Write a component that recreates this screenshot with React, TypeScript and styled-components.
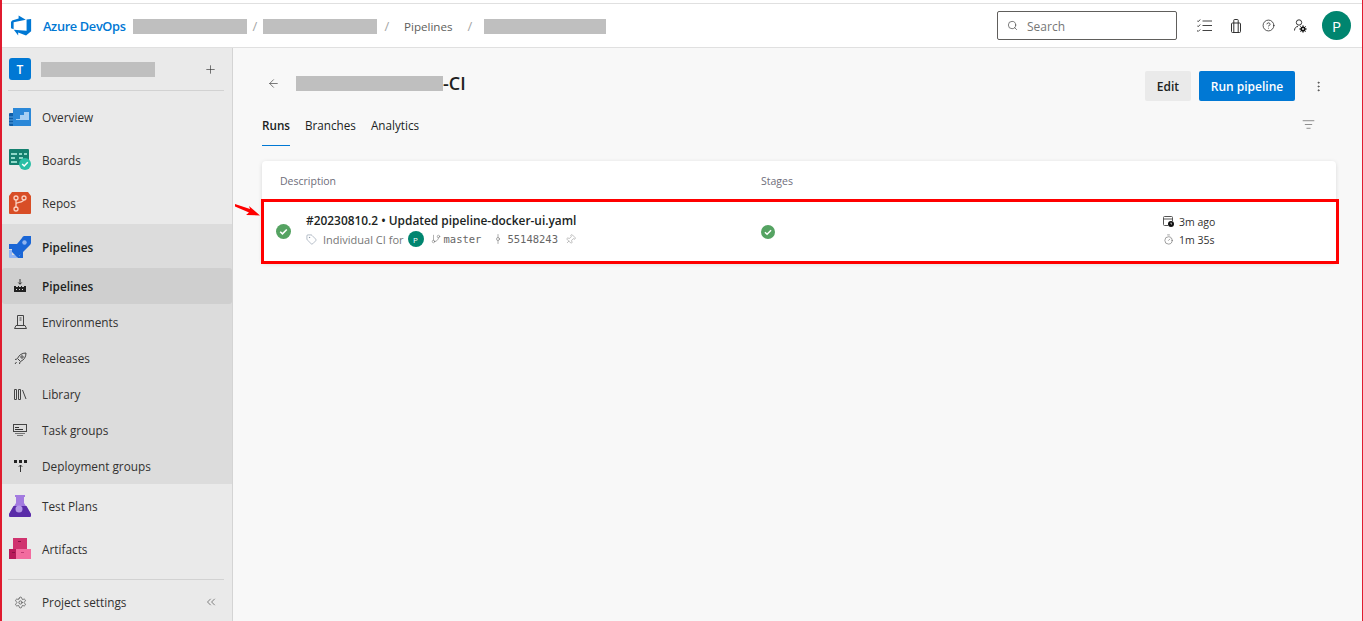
import styled, { createGlobalStyle } from 'styled-components';
import {
	ArrowLeft,
	ChevronsLeft,
	CircleHelp,
	EllipsisVertical,
	GitBranch,
	GitCommitVertical,
	ListFilter,
	Pin,
	Plus,
	Search,
	Settings,
	Tag,
	Timer,
} from 'lucide-react';

const GlobalStyle = createGlobalStyle`
	html, body {
		margin: 0;
		height: 100%;
		overflow: hidden;
	}
	body {
		background: #fff;
		font-family: "Open Sans", "Noto Sans", sans-serif;
		color: #201f1e;
	}
`;

// Icons
const LogoIcon = () => (
	<svg width="21" height="21" viewBox="0 0 24 24">
		<path fill="#0078d4" d="M23 4.6v14l-5.8 4.8-9-3.3v3.3l-5-6.6 14.6 1.200V5.200L23 4.600zm-6.100.8L8.700.7V4L1.300 6.200 0 8v7l3 1.300V8.300l14-2.900z" />
	</svg>
);

const ChecklistIcon = () => (
	<svg width="15" height="13" viewBox="0 0 15 13" fill="none" stroke="#444" strokeWidth="1">
		<path d="M0 1.500l1.200 1.200L3.200.5M0 6.500l1.200 1.200 2-2.200M0 11.500l1.200 1 2-2M5.500 2h9.500M5.500 6.500h9.500M5.500 11.500h9.500" />
	</svg>
);

const BagIcon = () => (
	<svg width="10" height="14" viewBox="0 0 10 14" fill="none" stroke="#333" strokeWidth="1">
		<rect x=".5" y="4" width="9" height="9.500" rx="1" />
		<path d="M2.800 4V1.200a.7.7 0 0 1 .7-.7h3a.7.7 0 0 1 .7.7V4M2.800 4v9.500M7.200 4v9.500" />
	</svg>
);

const UserGearIcon = () => (
	<svg width="13" height="14" viewBox="0 0 13 14">
		<circle cx="5" cy="3.500" r="2.700" fill="none" stroke="#333" />
		<path d="M.5 11.500c0-2.500 1.500-4 3.500-4" fill="none" stroke="#333" />
		<circle cx="9" cy="10" r="2.600" fill="#111" />
		<path d="M9 6.300v7.400M5.300 10h7.400M6.400 7.400l5.200 5.200M11.600 7.400l-5.200 5.200" stroke="#111" strokeWidth="1" />
		<circle cx="9" cy="10" r=".9" fill="#fff" />
	</svg>
);

const OverviewIcon = () => (
	<svg width="22" height="20" viewBox="0 0 22 20">
		<rect x="0" y="6" width="22" height="13" rx="1" fill="#0f5ea8" />
		<path d="M4 1h17a1 1 0 0 1 1 1v17H4z" fill="#2b88d8" />
		<path d="M7 12h4V8h4V5h5v8H7z" fill="#a8d0f3" />
		<path d="M0 10h4M0 13h4M0 16h4" stroke="#5ea6e2" strokeWidth="1" />
	</svg>
);

const BoardsIcon = () => (
	<svg width="22" height="21" viewBox="0 0 22 21">
		<rect x="0" y="0" width="20" height="16" rx="1" fill="#14806f" />
		<path d="M2 4h6v2H2zM10 4h3v2h-3zM15 4h3v2h-3zM2 8h4v2H2zM10 8h4v2h-4zM2 12h6v2H2z" fill="#8fd8c8" />
		<circle cx="16" cy="15" r="6" fill="#2bbfa6" />
		<path d="M13.200 15l2 2 3.600-3.800" fill="none" stroke="#fff" strokeWidth="1.500" />
	</svg>
);

const ReposIcon = () => (
	<svg width="22" height="22" viewBox="0 0 22 22">
		<path d="M3 0h16l3 4v17a1 1 0 0 1-1 1H1a1 1 0 0 1-1-1V4z" fill="#d84e26" />
		<path d="M7 7v9M7 12c0-2 8-1 8-5" fill="none" stroke="#fbd0c0" strokeWidth="1.300" />
		<circle cx="7" cy="6" r="2" fill="none" stroke="#fbd0c0" strokeWidth="1.300" />
		<circle cx="15" cy="6" r="2" fill="none" stroke="#fbd0c0" strokeWidth="1.300" />
		<circle cx="7" cy="17" r="2" fill="none" stroke="#fbd0c0" strokeWidth="1.300" />
	</svg>
);

const PipelinesIcon = () => (
	<svg width="22" height="22" viewBox="0 0 22 22">
		<path d="M0 14h3v5h5v3H1a1 1 0 0 1-1-1z" fill="#91b4f2" />
		<path d="M22 0v7a3 3 0 0 1-1 2L10 20v2H9l-3-3-3-3V8h5l5-6a3 3 0 0 1 2-2z" fill="#1a66d6" />
		<path d="M0 8h8l-5 5H0zM14 14v8H9l5-8z" fill="#1a66d6" />
		<circle cx="15.500" cy="6.500" r="2.200" fill="#8fb4f0" />
	</svg>
);

const TestPlansIcon = () => (
	<svg width="22" height="22" viewBox="0 0 22 22">
		<path d="M6 0h10v2h-1v6l7 11a2 2 0 0 1-2 3H2a2 2 0 0 1-2-3l7-11V2H6z" fill="#a37be0" />
		<path d="M4.500 11h13L22 19a2 2 0 0 1-2 3H2a2 2 0 0 1-2-3z" fill="#5a2ca8" />
		<circle cx="10" cy="14" r="3.500" fill="#b497e6" />
	</svg>
);

const ArtifactsIcon = () => (
	<svg width="22" height="21" viewBox="0 0 22 21">
		<rect x="4" y="0" width="14" height="11" fill="#d0336f" />
		<rect x="0" y="11" width="8" height="10" fill="#b81a5a" />
		<rect x="7" y="11" width="15" height="10" fill="#f26c9f" />
		<rect x="9" y="3" width="3" height="1" fill="#8c1145" />
		<rect x="12" y="14" width="3" height="1" fill="#c23b75" />
		<rect x="3" y="14" width="3" height="1" fill="#8c1145" />
	</svg>
);

const SubPipelinesIcon = () => (
	<svg width="14" height="14" viewBox="0 0 14 14">
		<path d="M7 0v5M5.300 3.500 7 5.300l1.700-1.800" fill="none" stroke="#333" strokeWidth="1" />
		<path d="M1 7h2v1h2V7h1v1h2V7h1v1h2V7h2v6H1z" fill="#222" />
		<path d="M3 10h1v1H3zM6 10h1v1H6zM9 10h1v1H9z" fill="#ddd" />
	</svg>
);

const EnvironmentsIcon = () => (
	<svg width="13" height="14" viewBox="0 0 13 14" fill="none" stroke="#444" strokeWidth="1">
		<path d="M3.500.5h6v10h-6zM.5 13.500l1.500-3h9l1.500 3z" />
		<path d="M5.500 3h2M5.500 5h2" />
	</svg>
);

const ReleasesIcon = () => (
	<svg width="13" height="13" viewBox="0 0 13 13" fill="none" stroke="#444" strokeWidth="1">
		<path d="M12 1c0 4-2 7-5.500 8.500l-3-3C5 3 8 1 12 1z" />
		<circle cx="8" cy="5" r="1.200" />
		<path d="M3 7 1 7.500M6 10l-.5 2M2.500 10 1 12" />
	</svg>
);

const LibraryIcon = () => (
	<svg width="13" height="11" viewBox="0 0 13 11" fill="none" stroke="#444" strokeWidth="1">
		<path d="M.5.500h2v10h-2zM4.500.500h2v10h-2zM8.500 1l3.500 9" />
	</svg>
);

const TaskGroupsIcon = () => (
	<svg width="14" height="12" viewBox="0 0 14 12">
		<rect x=".5" y=".5" width="13" height="7" fill="none" stroke="#444" />
		<path d="M2 3h4v1H2zM2 5h8v1H2z" fill="#333" />
		<path d="M2 9h10v1H2zM4 11h6v1H4z" fill="#777" />
	</svg>
);

const DeploymentGroupsIcon = () => (
	<svg width="13" height="12" viewBox="0 0 13 12">
		<path d="M0 0h3v3H0zM5 0h3v3H5zM10 0h3v3h-3z" fill="#222" />
		<path d="M6.500 12V5M4.800 6.800 6.500 5l1.700 1.800" fill="none" stroke="#333" />
	</svg>
);

const CheckBadge = ({ size }: { size: number }) => (
	<svg width={size} height={size} viewBox="0 0 16 16">
		<circle cx="8" cy="8" r="8" fill="#55a362" />
		<path d="M4.500 8.300l2.400 2.200 4.600-4.600" fill="none" stroke="#fff" strokeWidth="1.700" />
	</svg>
);

const CalendarClockIcon = () => (
	<svg width="11" height="11" viewBox="0 0 11 11">
		<path d="M5 9.500H1.500a1 1 0 0 1-1-1v-7a1 1 0 0 1 1-1h7a1 1 0 0 1 1 1V5M.5 3h9" fill="none" stroke="#555" />
		<circle cx="8" cy="8" r="3" fill="#111" />
		<path d="M8 6.500V8h1" fill="none" stroke="#fff" strokeWidth=".7" />
	</svg>
);

const RedArrow = () => (
	<svg width="26" height="14" viewBox="0 0 26 14">
		<path d="M0 1 15 6l-1-3 11 9.500L11 12l3-2.500L0 3.500z" fill="#f00" />
	</svg>
);

// Data
const topNav = [
	{ label: 'Overview', icon: <OverviewIcon /> },
	{ label: 'Boards', icon: <BoardsIcon /> },
	{ label: 'Repos', icon: <ReposIcon /> },
];

const subNav = [
	{ label: 'Pipelines', icon: <SubPipelinesIcon />, active: true },
	{ label: 'Environments', icon: <EnvironmentsIcon /> },
	{ label: 'Releases', icon: <ReleasesIcon /> },
	{ label: 'Library', icon: <LibraryIcon /> },
	{ label: 'Task groups', icon: <TaskGroupsIcon /> },
	{ label: 'Deployment groups', icon: <DeploymentGroupsIcon /> },
];

export default function App() {
	return (
		<>
			<GlobalStyle />
			<Frame>
				<Header>
					<Logo>
						<LogoIcon />
						<Brand>Azure DevOps</Brand>
					</Logo>
					<Crumbs>
						<Redacted $w={114} $h={15} />
						<Slash $w={16}>/</Slash>
						<Redacted $w={114} $h={15} />
						<Slash $w={20}>/</Slash>
						<Crumb>Pipelines</Crumb>
						<Slash $w={20} $after={4}>
							/
						</Slash>
						<Redacted $w={122} $h={15} />
					</Crumbs>
					<SearchBox>
						<Search size={11} strokeWidth={1.5} color="#444" />
						<SearchLabel>Search</SearchLabel>
					</SearchBox>
					<HeaderIcons>
						<HeaderIcon>
							<ChecklistIcon />
						</HeaderIcon>
						<HeaderIcon>
							<BagIcon />
						</HeaderIcon>
						<HeaderIcon>
							<CircleHelp size={13} strokeWidth={1.4} color="#222" />
						</HeaderIcon>
						<HeaderIcon>
							<UserGearIcon />
						</HeaderIcon>
					</HeaderIcons>
					<Avatar>P</Avatar>
				</Header>
				<Body>
					<Sidebar>
						<ProjectRow>
							<ProjectBadge>T</ProjectBadge>
							<Redacted $w={114} $h={15} />
							<PlusButton>
								<Plus size={13} strokeWidth={1.2} color="#333" />
							</PlusButton>
						</ProjectRow>
						<Divider />
						<Nav>
							{topNav.map((item) => (
								<NavRow key={item.label}>
									<IconSlot>{item.icon}</IconSlot>
									{item.label}
								</NavRow>
							))}
							<Group>
								<GroupTitle>
									<IconSlot>
										<PipelinesIcon />
									</IconSlot>
									<strong>Pipelines</strong>
								</GroupTitle>
								{subNav.map((item) => (
									<SubRow key={item.label} $active={item.active}>
										<IconSlot>{item.icon}</IconSlot>
										{item.active ? <strong>{item.label}</strong> : item.label}
									</SubRow>
								))}
							</Group>
							<NavRow>
								<IconSlot>
									<TestPlansIcon />
								</IconSlot>
								Test Plans
							</NavRow>
							<NavRow>
								<IconSlot>
									<ArtifactsIcon />
								</IconSlot>
								Artifacts
							</NavRow>
						</Nav>
						<FooterDivider />
						<SettingsRow>
							<IconSlot>
								<Settings size={13} strokeWidth={1.3} color="#444" />
							</IconSlot>
							Project settings
							<Collapse>
								<ChevronsLeft size={14} strokeWidth={1.1} color="#444" />
							</Collapse>
						</SettingsRow>
					</Sidebar>
					<Main>
						<TitleBar>
							<ArrowLeft size={13} strokeWidth={1.3} color="#444" />
							<TitleText>
								<Redacted $w={147} $h={15} />
								<Title>-CI</Title>
							</TitleText>
							<Actions>
								<EditButton>Edit</EditButton>
								<RunButton>Run pipeline</RunButton>
								<MoreButton>
									<EllipsisVertical size={13} strokeWidth={1.5} color="#444" />
								</MoreButton>
							</Actions>
						</TitleBar>
						<TabBar>
							<Tab $active>Runs</Tab>
							<Tab>Branches</Tab>
							<Tab>Analytics</Tab>
							<FilterButton>
								<ListFilter size={13} strokeWidth={1.2} color="#555" />
							</FilterButton>
						</TabBar>
						<Card>
							<TableHead>
								<DescCell>Description</DescCell>
								<span>Stages</span>
							</TableHead>
							<RunRow>
								<StatusSlot>
									<CheckBadge size={15} />
								</StatusSlot>
								<RunInfo>
									<RunTitle>#20230810.2 • Updated pipeline-docker-ui.yaml</RunTitle>
									<RunMeta>
										<Tag size={11} strokeWidth={1.1} color="#6f7f95" />
										<MetaText>Individual CI for</MetaText>
										<MiniAvatar>P</MiniAvatar>
										<GitBranch size={10} strokeWidth={1.2} color="#666" />
										<Mono>master</Mono>
										<GitCommitVertical size={12} strokeWidth={1.2} color="#777" />
										<Mono>55148243</Mono>
										<PinIcon size={11} strokeWidth={1.1} color="#888" />
									</RunMeta>
								</RunInfo>
								<StageSlot>
									<CheckBadge size={14} />
								</StageSlot>
								<RunTimes>
									<TimeRow>
										<CalendarClockIcon />
										3m ago
									</TimeRow>
									<TimeRow>
										<Timer size={11} strokeWidth={1.2} color="#555" />
										1m 35s
									</TimeRow>
								</RunTimes>
								<Callout />
								<ArrowMark>
									<RedArrow />
								</ArrowMark>
							</RunRow>
						</Card>
					</Main>
				</Body>
			</Frame>
		</>
	);
}

const Frame = styled.div`
	width: 1363px;
	height: 621px;
	box-sizing: border-box;
	display: flex;
	flex-direction: column;
	border-left: 2px solid #e01b2f;
	border-right: 1px solid #e01b2f;
	padding-top: 3px;
	overflow: hidden;
`;

const Header = styled.header`
	height: 45px;
	flex: none;
	box-sizing: border-box;
	border-top: 1px solid #e0e0e0;
	border-bottom: 1px solid #e0e0e0;
	display: flex;
	align-items: center;
	padding: 0 11px 0 9px;
	background: #fff;
`;

const Logo = styled.div`
	display: flex;
	align-items: center;
	width: 122px;
	flex: none;
	gap: 11px;
`;

const Brand = styled.span`
	font-size: 12.8px;
	font-weight: 600;
	color: #0078d4;
	letter-spacing: -0.35px;
`;

const Crumbs = styled.div`
	display: flex;
	align-items: center;
	margin-top: 1px;
`;

const Redacted = styled.div<{ $w: number; $h: number }>`
	width: ${(p) => p.$w}px;
	height: ${(p) => p.$h}px;
	background: #bfbfbf;
	flex: none;
`;

const Slash = styled.span<{ $w: number; $after?: number }>`
	width: ${(p) => p.$w}px;
	margin-right: ${(p) => p.$after ?? 0}px;
	text-align: center;
	font-size: 13px;
	color: #a6a6a6;
	flex: none;
`;

const Crumb = styled.span`
	width: 49px;
	flex: none;
	font-size: 11.6px;
	color: #605e5c;
	margin: 0 7px;
`;

const SearchBox = styled.div`
	margin-left: auto;
	width: 180px;
	height: 29px;
	box-sizing: border-box;
	border: 1px solid #605e5c;
	border-radius: 2px;
	display: flex;
	align-items: center;
	gap: 9px;
	padding: 0 9px;
	font-size: 12px;
	color: #767676;
`;

const SearchLabel = styled.span`
	margin-top: 1px;
`;

const HeaderIcons = styled.div`
	display: flex;
	align-items: center;
	margin: 0 6px 0 11px;
`;

const HeaderIcon = styled.span`
	width: 32px;
	display: flex;
	justify-content: center;
`;

const Avatar = styled.div`
	width: 29px;
	height: 29px;
	border-radius: 50%;
	background: #00856f;
	color: #fff;
	font-size: 15px;
	display: flex;
	align-items: center;
	justify-content: center;
`;

const Body = styled.div`
	flex: 1;
	display: flex;
	min-height: 0;
`;

const Sidebar = styled.aside`
	width: 231px;
	flex: none;
	box-sizing: border-box;
	background: #eaeaea;
	border-right: 1px solid #d4d4d4;
	display: flex;
	flex-direction: column;
	font-size: 11.8px;
`;

const ProjectRow = styled.div`
	height: 42px;
	flex: none;
	display: flex;
	align-items: center;
	padding: 0 15px 0 7px;
	gap: 10px;
`;

const ProjectBadge = styled.div`
	width: 22px;
	height: 22px;
	border-radius: 3px;
	background: #0078d4;
	color: #fff;
	font-size: 12px;
	font-weight: 600;
	display: flex;
	align-items: center;
	justify-content: center;
`;

const PlusButton = styled.span`
	margin-left: auto;
	display: flex;
`;

const Divider = styled.div`
	height: 1px;
	background: #d2d2d2;
	margin: 0 8px 4px 6px;
	flex: none;
`;

const Nav = styled.nav`
	display: flex;
	flex-direction: column;
`;

const NavRow = styled.div`
	height: 43px;
	display: flex;
	align-items: center;
	color: #323130;
`;

const IconSlot = styled.span`
	width: 22px;
	margin: 0 11px 0 7px;
	display: flex;
	align-items: center;
	justify-content: center;
	flex: none;
`;

const Group = styled.div`
	background: #dcdcdc;
	display: flex;
	flex-direction: column;

	strong {
		font-weight: 600;
		color: #201f1e;
	}
`;

const GroupTitle = styled.div`
	height: 44px;
	box-sizing: border-box;
	padding-top: 2px;
	display: flex;
	align-items: center;
`;

const SubRow = styled.div<{ $active?: boolean }>`
	height: 36px;
	display: flex;
	align-items: center;
	color: #323130;
	border-radius: 3px;
	background: ${(p) => (p.$active ? '#cfcfcf' : 'transparent')};
`;

const FooterDivider = styled.div`
	height: 1px;
	background: #d2d2d2;
	margin: 9px 8px 0 6px;
	flex: none;
`;

const SettingsRow = styled.div`
	flex: 1;
	display: flex;
	align-items: center;
	color: #323130;
	padding-top: 3px;
`;

const Collapse = styled.span`
	margin-left: auto;
	margin-right: 14px;
	display: flex;
`;

const Main = styled.main`
	flex: 1;
	min-width: 0;
	background: #f8f8f8;
	display: flex;
	flex-direction: column;
	padding: 0 26px 0 29px;
	box-sizing: border-box;
`;

const TitleBar = styled.div`
	height: 70px;
	flex: none;
	display: flex;
	align-items: center;
	padding-left: 5px;
`;

const TitleText = styled.div`
	display: flex;
	align-items: center;
	margin-left: 16px;
`;

const Title = styled.span`
	font-size: 18px;
	font-weight: 600;
	color: #201f1e;
`;

const Actions = styled.div`
	margin-left: auto;
	display: flex;
	align-items: center;
	gap: 8px;
	margin-top: 6px;
`;

const EditButton = styled.button`
	height: 30px;
	width: 46px;
	border: none;
	border-radius: 2px;
	background: #eaeaea;
	font: 600 12px "Open Sans", sans-serif;
	color: #201f1e;
	padding: 0;
`;

const RunButton = styled.button`
	height: 30px;
	width: 96px;
	border: none;
	border-radius: 2px;
	background: #0078d4;
	color: #fff;
	font: 600 12px "Open Sans", sans-serif;
	padding: 0;
`;

const MoreButton = styled.span`
	display: flex;
	width: 30px;
	justify-content: center;
	margin-right: 3px;
`;

const TabBar = styled.div`
	height: 49px;
	flex: none;
	display: flex;
	align-items: flex-start;
	gap: 15px;
	font-size: 11.7px;
	margin-top: -6px;
`;

const Tab = styled.div<{ $active?: boolean }>`
	height: 34px;
	box-sizing: border-box;
	padding-top: 5px;
	font-weight: ${(p) => (p.$active ? 600 : 400)};
	color: #201f1e;
	border-bottom: 1px solid ${(p) => (p.$active ? '#0078d4' : 'transparent')};
`;

const FilterButton = styled.span`
	margin-left: auto;
	margin-right: 21px;
	padding-top: 6px;
	display: flex;
`;

const Card = styled.section`
	background: #fff;
	border-radius: 4px;
	box-shadow: 0 1px 4px rgba(0, 0, 0, 0.13);
	display: flex;
	flex-direction: column;
`;

const TableHead = styled.div`
	height: 39px;
	display: flex;
	align-items: center;
	font-size: 10.5px;
	color: #6e6d7a;
	padding-left: 18px;
`;

const DescCell = styled.span`
	width: 481px;
	flex: none;
`;

const RunRow = styled.div`
	position: relative;
	height: 63px;
	display: flex;
	align-items: center;
`;

const StatusSlot = styled.span`
	width: 44px;
	display: flex;
	padding-left: 14px;
	box-sizing: border-box;
	flex: none;
`;

const RunInfo = styled.div`
	width: 455px;
	flex: none;
	display: flex;
	flex-direction: column;
	gap: 3px;
	margin-top: -4px;
`;

const RunTitle = styled.div`
	font-size: 11.9px;
	font-weight: 600;
	color: #201f1e;
`;

const RunMeta = styled.div`
	display: flex;
	align-items: center;
	gap: 4px;
	font-size: 11px;
	color: #767676;
`;

const MetaText = styled.span`
	margin-left: 2px;
`;

const MiniAvatar = styled.span`
	width: 16px;
	height: 16px;
	border-radius: 50%;
	background: #00856f;
	color: #fff;
	font-size: 8px;
	display: flex;
	align-items: center;
	justify-content: center;
	margin-right: 3px;
`;

const Mono = styled.span`
	font-family: "DejaVu Sans Mono", "Liberation Mono", monospace;
	font-size: 10.5px;
	color: #666;
	margin: 0 7px 0 -1px;
`;

const PinIcon = styled(Pin)`
	transform: rotate(45deg);
	margin-left: -4px;
`;

const StageSlot = styled.span`
	width: 402px;
	flex: none;
	display: flex;
`;

const RunTimes = styled.div`
	display: flex;
	flex-direction: column;
	gap: 4px;
	font-size: 10.5px;
	color: #323130;
	margin-top: -2px;
`;

const TimeRow = styled.div`
	display: flex;
	align-items: center;
	gap: 5px;
`;

const Callout = styled.div`
	position: absolute;
	left: -1px;
	right: -3px;
	top: -1px;
	bottom: -1px;
	border: 3px solid #f00;
	pointer-events: none;
`;

const ArrowMark = styled.span`
	position: absolute;
	left: -27px;
	top: 3px;
	display: flex;
`;
